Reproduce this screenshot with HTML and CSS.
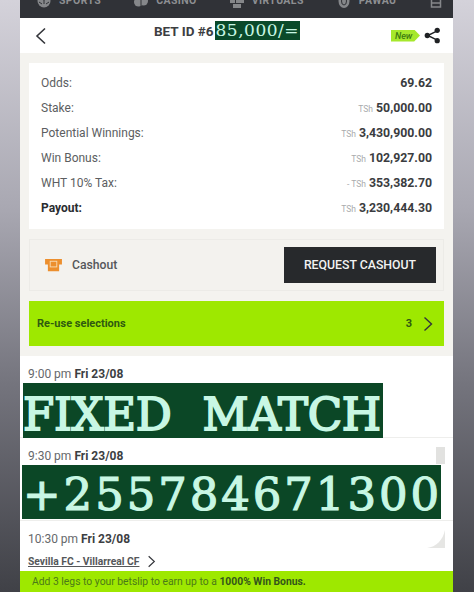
FILE: index.html
```html
<!DOCTYPE html>
<html lang="en">
<head>
  <meta charset="UTF-8" />
  <meta name="viewport" content="width=device-width, initial-scale=1" />
  <title>Bet details</title>
  <link rel="stylesheet" href="styles.css">
</head>
<body>
  <div class="phone">
    <nav class="topnav">
      <span class="nav-item"><svg class="nav-icon" viewBox="0 0 14 14"><circle cx="7" cy="7" r="6.500"/><path class="nav-cut" d="M4 4l3 2 3-2M7 6v4M2 8l3 2M12 8l-3 2"/></svg><span>SPORTS</span></span>
      <span class="nav-item"><svg class="nav-icon" viewBox="0 0 14 14"><circle cx="4.500" cy="8" r="4.500"/><circle cx="9.500" cy="7" r="4.500"/><path class="nav-cut" d="M7 2v11"/></svg><span>CASINO</span></span>
      <span class="nav-item"><svg class="nav-icon" viewBox="0 0 14 14"><path d="M0 1h5v8H0zM6 1h8v8H6zM3 10h8v4H3z"/></svg><span>VIRTUALS</span></span>
      <span class="nav-item"><svg class="nav-icon" viewBox="0 0 14 14"><ellipse cx="7" cy="7" rx="5.500" ry="7"/><ellipse class="nav-cut" cx="7" cy="7" rx="2.500" ry="4"/></svg><span>PAWAU</span></span>
      <span class="nav-item"><svg class="nav-icon" viewBox="0 0 14 14"><path class="nav-box" d="M2.500 1h9v12h-9zM2.500 9h9"/></svg></span>
    </nav>

    <header class="bet-head">
      <svg class="back" viewBox="0 0 12 18"><path d="M10 1.500 2 9l8 7.500"/></svg>
      <div class="bet-title">BET ID #6<span class="mark-small">85,000/=</span></div>
      <div class="head-right">
        <span class="new-tag">New</span>
        <svg class="share" viewBox="0 0 18 18"><path class="share-line" d="M14 4 4 9l10 5"/><circle cx="14" cy="3.500" r="2.800"/><circle cx="3.500" cy="9" r="2.800"/><circle cx="14" cy="14.500" r="2.800"/></svg>
      </div>
    </header>

    <main class="content">
      <section class="summary">
        <div class="row"><span>Odds:</span><b>69.62</b></div>
        <div class="row"><span>Stake:</span><div><small>TSh</small> <b>50,000.00</b></div></div>
        <div class="row"><span>Potential Winnings:</span><div><small>TSh</small> <b>3,430,900.00</b></div></div>
        <div class="row"><span>Win Bonus:</span><div><small>TSh</small> <b>102,927.00</b></div></div>
        <div class="row"><span>WHT 10% Tax:</span><div><small>- TSh</small> <b>353,382.70</b></div></div>
        <div class="row row-total"><b>Payout:</b><div><small>TSh</small> <b>3,230,444.30</b></div></div>
      </section>

      <section class="cashout">
        <div class="cashout-label">
          <svg class="cash-icon" viewBox="0 0 18 16"><path d="M0 1h18v6h-3v7H3V7H0z"/><rect class="cash-screen" x="5.500" y="3.500" width="7" height="6"/></svg>
          Cashout
        </div>
        <button class="cash-btn">REQUEST CASHOUT</button>
      </section>

      <section class="reuse">
        <b>Re-use selections</b>
        <div class="reuse-right"><b>3</b><svg class="chev" viewBox="0 0 10 16"><path d="M1.500 1.500 8.500 8l-7 6.500"/></svg></div>
      </section>
    </main>

    <section class="legs">
      <div class="leg leg-first"><span>9:00 pm</span> <b>Fri 23/08</b></div>
      <div class="leg-rule leg-rule-one"></div>
      <div class="leg leg-second"><span>9:30 pm</span> <b>Fri 23/08</b><i class="leg-badge"></i></div>
      <div class="leg-rule leg-rule-two"></div>
      <div class="leg leg-third"><span>10:30 pm</span> <b>Fri 23/08</b><svg class="leg-corner" viewBox="0 0 18 18"><path d="M18 0v18H0C9 17 16 10 18 0z"/></svg></div>
      <div class="match"><a>Sevilla FC - Villarreal CF</a><svg class="chev-small" viewBox="0 0 10 16"><path d="M1.500 1.500 8.500 8l-7 6.500"/></svg></div>
    </section>

    <footer class="promo">Add 3 legs to your betslip to earn up to a <b>1000% Win Bonus.</b></footer>
  </div>

  <div class="mark mark-one">FIXED MATCH</div>
  <div class="mark mark-two">+255784671300</div>
</body>
</html>
```

FILE: styles.css
```css
* {
  box-sizing: border-box;
  margin: 0;
  padding: 0;
}
html, body {
  height: 100%;
}
body {
  font-family: 'Roboto', sans-serif;
  background: linear-gradient(to bottom, #d4d2da 0%, #a9a8b2 35%, #74747d 65%, #404147 100%);
  overflow: hidden;
  position: relative;
}
.phone {
  width: 433px;
  height: 592px;
  margin-left: 20px;
  background: #f4f3ef;
  display: flex;
  flex-direction: column;
  overflow: hidden;
}

/* top nav, the photo cuts it off at the top */
.topnav {
  height: 18px;
  flex: none;
  background: #303237;
  color: #8d8f92;
  display: flex;
  align-items: flex-start;
  padding-left: 17px;
  gap: 33px;
  font-size: 10.5px;
  font-weight: 700;
  letter-spacing: 0.4px;
  overflow: hidden;
}
.nav-item {
  display: flex;
  align-items: flex-start;
  gap: 8px;
  line-height: 10px;
  margin-top: -6px;
}
.nav-item span {
  margin-top: 2px;
}
.nav-icon {
  width: 14px;
  height: 14px;
  fill: #85878a;
}
.nav-cut {
  fill: none;
  stroke: #303237;
  stroke-width: 1;
}
.nav-box {
  fill: none;
  stroke: #85878a;
  stroke-width: 1.500;
}

.bet-head {
  height: 35px;
  flex: none;
  background: #fff;
  display: flex;
  align-items: center;
  padding: 0 12px 0 15px;
  position: relative;
}
.back {
  width: 12px;
  height: 18px;
  fill: none;
  stroke: #33353a;
  stroke-width: 1.600;
}
.bet-title {
  position: absolute;
  left: 134px;
  top: 3px;
  display: flex;
  align-items: center;
  font-size: 13.500px;
  font-weight: 700;
  color: #3c3e42;
}
.mark-small {
  font-family: 'DejaVu Serif', serif;
  font-weight: 400;
  font-size: 17px;
  letter-spacing: 0.500px;
  line-height: 19px;
  background: #0a4a2a;
  color: #c8f7e4;
  margin-left: 1px;
  padding: 0 1px;
  height: 19px;
}
.head-right {
  margin-left: auto;
  display: flex;
  align-items: center;
  gap: 4px;
}
.new-tag {
  width: 29px;
  height: 12px;
  background: #a6e82c;
  clip-path: polygon(0 0, 80% 0, 100% 50%, 80% 100%, 0 100%);
  color: #3c7a10;
  font-size: 9px;
  font-style: italic;
  font-weight: 500;
  line-height: 12px;
  padding-left: 4px;
}
.share {
  width: 17px;
  height: 17px;
  fill: #1f2124;
}
.share-line {
  fill: none;
  stroke: #1f2124;
  stroke-width: 1.500;
}

.content {
  padding: 10px 9px;
  display: flex;
  flex-direction: column;
  gap: 10px;
}
.summary {
  background: #fff;
  height: 166px;
  padding: 8px 12px 0 12px;
  display: flex;
  flex-direction: column;
}
.row {
  display: flex;
  justify-content: space-between;
  align-items: center;
  height: 24.900px;
  font-size: 12px;
  color: #5c5e61;
}
.row b {
  font-size: 12.300px;
  font-weight: 700;
  color: #3a3c40;
}
.row small {
  font-size: 8.500px;
  color: #a9abad;
}
.row-total > b {
  font-size: 12px;
  color: #2a2c30;
}

.cashout {
  height: 52px;
  background: #f3f2ee;
  border: 1px solid #ecebe7;
  display: flex;
  align-items: center;
  justify-content: space-between;
  padding: 0 7px 0 15px;
}
.cashout-label {
  display: flex;
  align-items: center;
  gap: 10px;
  font-size: 12.200px;
  font-weight: 500;
  color: #55575a;
}
.cash-icon {
  width: 17px;
  height: 15px;
  fill: #ec8f2e;
}
.cash-screen {
  fill: none;
  stroke: #f6d9b0;
  stroke-width: 1;
}
.cash-btn {
  width: 152px;
  height: 36px;
  background: #27292c;
  color: #f2f2f2;
  border: none;
  font-family: inherit;
  font-size: 12.300px;
  font-weight: 500;
}

.reuse {
  height: 45px;
  background: #9ee800;
  color: #2f5a10;
  font-size: 11px;
  display: flex;
  align-items: center;
  justify-content: space-between;
  padding: 0 11px 0 8px;
}
.reuse-right {
  display: flex;
  align-items: center;
  gap: 11px;
}
.chev {
  width: 10px;
  height: 16px;
  fill: none;
  stroke: #33353a;
  stroke-width: 1.400;
}

.legs {
  background: #fff;
  flex: 1;
  padding-left: 8px;
}
.leg {
  font-size: 12px;
  color: #66686b;
  height: 16px;
  line-height: 16px;
  position: relative;
}
.leg b {
  color: #3c3e42;
  font-weight: 700;
}
.leg-first,
.leg-second,
.leg-third {
  margin-top: 10px;
}
.leg-rule {
  height: 1px;
  background: #eeeeec;
  margin-left: -8px;
}
.leg-rule-one {
  margin-top: 55px;
}
.leg-rule-two {
  margin-top: 56px;
}
.leg-badge {
  position: absolute;
  right: 8px;
  top: -1px;
  width: 9px;
  height: 17px;
  background: #e2e2e0;
}
.leg-corner {
  position: absolute;
  right: 8px;
  top: -1px;
  width: 18px;
  height: 18px;
  fill: #e6e6e4;
}
.match {
  margin-top: 8px;
  font-size: 10.300px;
  font-weight: 700;
  color: #55575a;
  display: flex;
  align-items: center;
  gap: 8px;
}
.match a {
  text-decoration: underline;
}
.chev-small {
  width: 9px;
  height: 13px;
  fill: none;
  stroke: #33353a;
  stroke-width: 1.400;
}

.promo {
  height: 21px;
  flex: none;
  background: #9ee800;
  color: #4b7a18;
  font-size: 10.350px;
  line-height: 21px;
  padding-left: 12px;
}
.promo b {
  color: #33561a;
}

/* text-highlight stickers pasted over the screenshot */
.mark {
  position: absolute;
  font-family: 'DejaVu Serif', serif;
  font-weight: 400;
  background: #0b4726;
  color: #c8f7e4;
  white-space: nowrap;
}
.mark-one {
  left: 23px;
  top: 383px;
  width: 360px;
  height: 55px;
  padding-top: 9px;
  font-size: 45px;
  line-height: 46px;
  letter-spacing: -0.300px;
  word-spacing: 17px;
  -webkit-text-stroke: 1.800px #c8f7e4;
}
.mark-two {
  left: 22px;
  top: 465px;
  width: 419px;
  height: 54px;
  padding: 5px 0 0 1px;
  font-size: 45px;
  line-height: 49px;
  letter-spacing: 2.900px;
  -webkit-text-stroke: 1.200px #c8f7e4;
}
```
